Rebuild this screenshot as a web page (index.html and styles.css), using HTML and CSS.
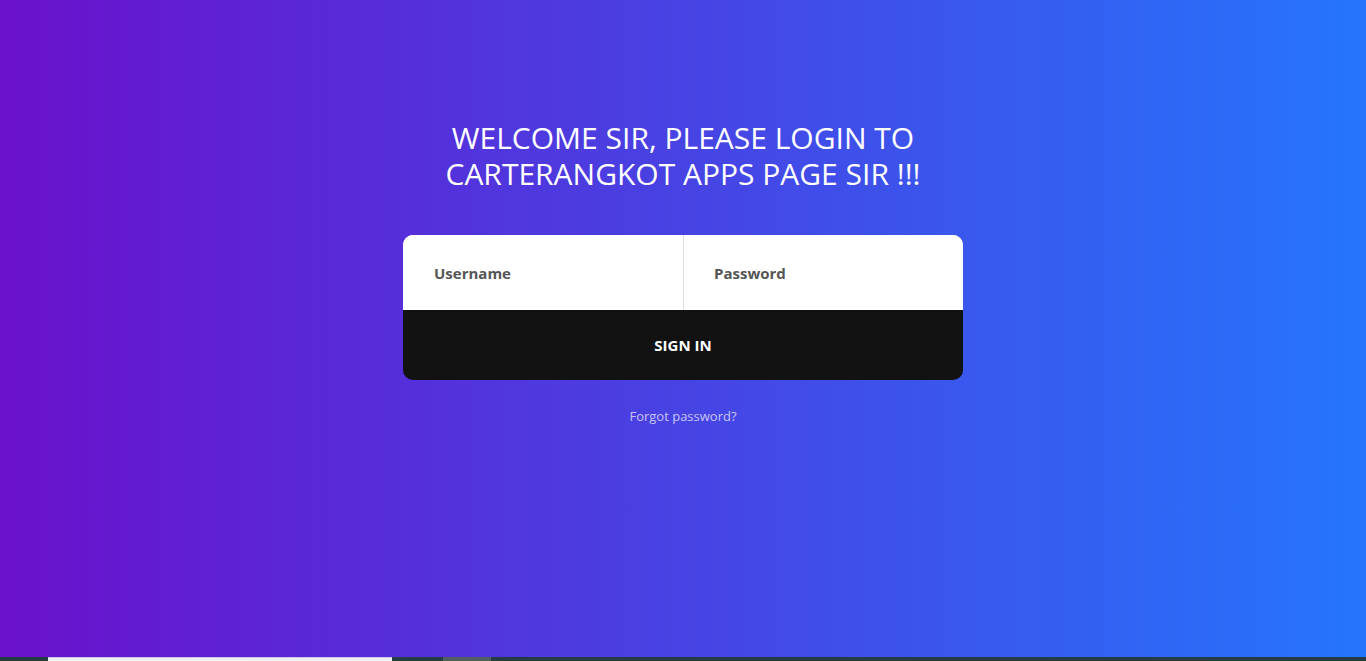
FILE: index.html
```html
<!DOCTYPE html>
<html lang="en">
<head>
<meta charset="utf-8">
<title>Login</title>
<link rel="stylesheet" href="styles.css">
</head>
<body>
<main class="page">
  <h1 class="title">WELCOME SIR, PLEASE LOGIN TO<br>CARTERANGKOT APPS PAGE SIR !!!</h1>
  <form class="card">
    <div class="fields">
      <input class="field" type="text" placeholder="Username">
      <input class="field field-right" type="password" placeholder="Password">
    </div>
    <button class="btn" type="button">SIGN IN</button>
  </form>
  <a class="forgot" href="#">Forgot password?</a>
</main>
<div class="strip">
  <span class="strip-a"></span>
  <span class="strip-b"></span>
  <span class="strip-c"></span>
  <span class="strip-d"></span>
  <span class="strip-e"></span>
</div>
</body>
</html>
```

FILE: styles.css
```css
* { box-sizing: border-box; }
html, body { margin: 0; padding: 0; }
body {
  height: 661px;
  display: flex;
  flex-direction: column;
  font-family: "Open Sans", "Liberation Sans", sans-serif;
  background: linear-gradient(to right, #6a11cb 0%, #2575fc 100%);
  overflow: hidden;
}
.page {
  flex: 1;
  display: flex;
  flex-direction: column;
  align-items: center;
  padding-top: 120px;
}
.title {
  margin: 0;
  color: #fff;
  font-weight: 400;
  font-size: 30px;
  line-height: 36px;
  text-align: center;
}
.card {
  margin-top: 43px;
  width: 560px;
  border-radius: 10px;
  overflow: hidden;
  display: flex;
  flex-direction: column;
}
.fields { display: flex; height: 75px; background: #fff; }
.field {
  flex: 1;
  min-width: 0;
  border: 0;
  outline: none;
  padding: 0 0 0 31px;
  font-family: inherit;
  font-size: 15px;
  font-weight: 700;
  color: #555;
  background: #fff;
}
.field::placeholder { color: #555; opacity: 1; }
.field-right { border-left: 1px solid #ddd; padding-left: 30px; }
.btn {
  height: 70px;
  border: 0;
  background: #121212;
  color: #fff;
  font-family: inherit;
  font-size: 15px;
  font-weight: 700;
  cursor: pointer;
}
.forgot {
  margin-top: 27px;
  font-size: 13px;
  color: rgba(255,255,255,0.7);
  text-decoration: none;
}
.strip {
  height: 4px;
  display: flex;
  background: #263c45;
}
.strip-a { width: 48px; }
.strip-b { width: 344px; background: #f0f0f0; border-top: 1px solid #c8c8e8; }
.strip-c { width: 51px; }
.strip-d { width: 48px; background: #4f5e63; }
.strip-e { flex: 1; }
```
